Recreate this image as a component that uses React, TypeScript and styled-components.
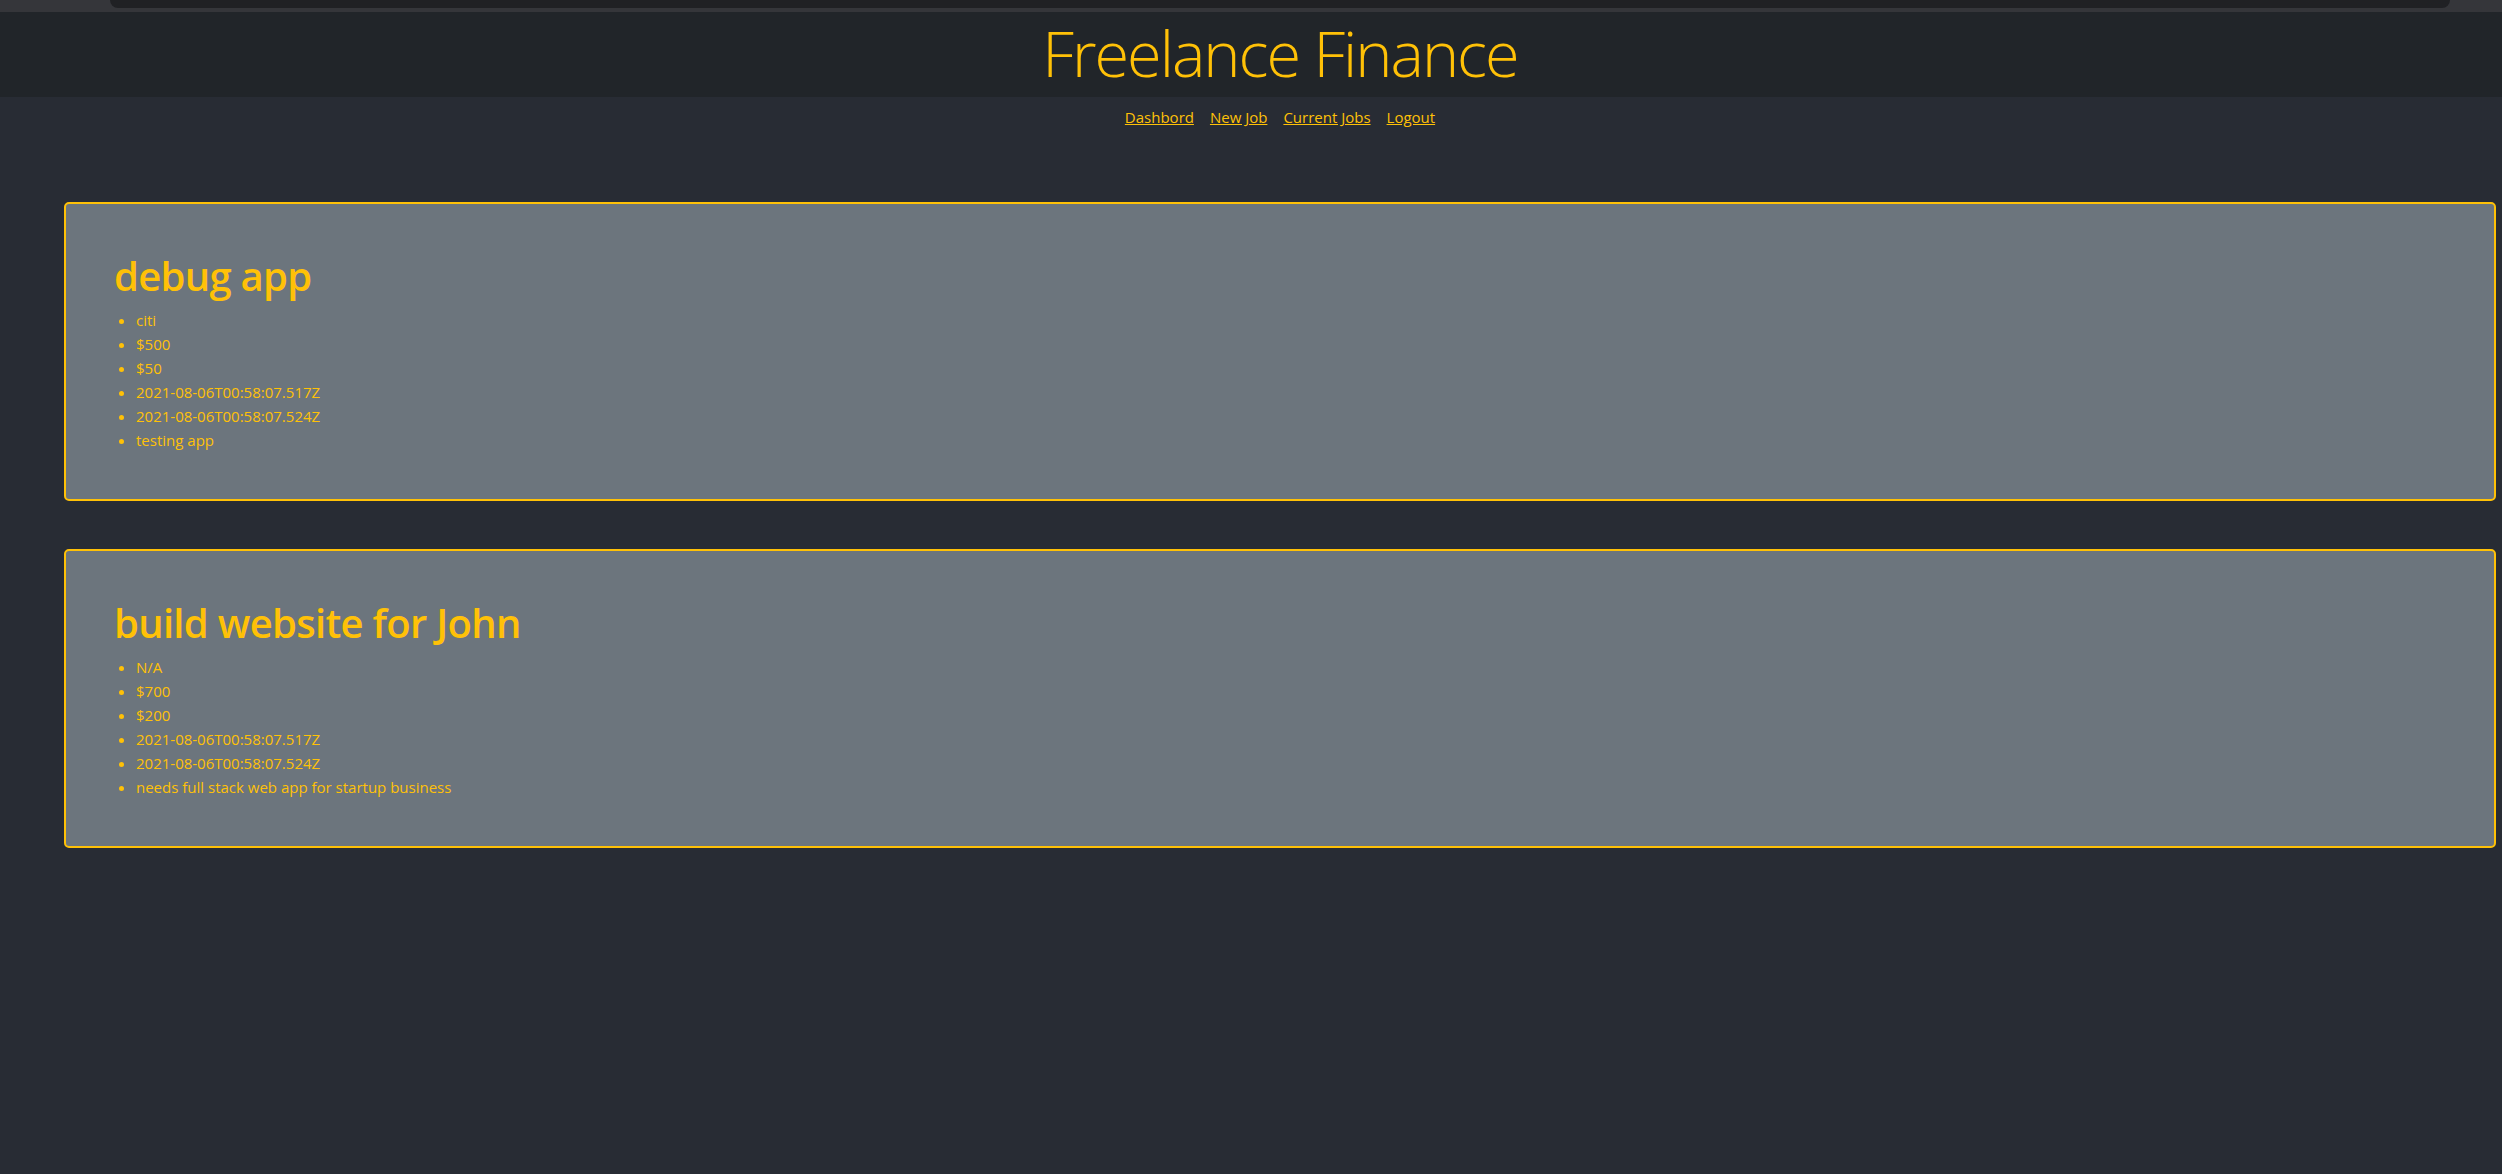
import React from "react";
import styled, { createGlobalStyle } from "styled-components";

const GlobalStyle = createGlobalStyle`
  html, body {
    margin: 0;
    padding: 0;
    overflow: hidden;
    background: #282c34;
  }
  body {
    font-family: "Open Sans", "Noto Sans", "Liberation Sans", sans-serif;
    font-size: 16px;
    line-height: 1.5;
    color: #ffc107;
  }
`;

const Page = styled.div`
  width: 2560px;
  min-height: 1174px;
  background: #282c34;
  display: flex;
  flex-direction: column;
`;

const BrowserStrip = styled.div`
  height: 12px;
  background: #35363a;
  display: flex;
  padding: 0 52px 0 110px;
  width: 2502px;
  box-sizing: border-box;
`;

const UrlBar = styled.div`
  flex: 1;
  height: 8px;
  background: #202124;
  border-radius: 0 0 12px 12px;
`;

const Header = styled.header`
  background: #212529;
  text-align: center;
  padding-top: 3px;
`;

const Title = styled.h1`
  margin: 0 0 6.4px;
  font-size: 63px;
  font-weight: 300;
  line-height: 1.2;
  color: #ffc107;
  letter-spacing: -2px;
`;

const Nav = styled.nav`
  display: flex;
  justify-content: center;
  gap: 16px;
  padding-top: 8px;
  line-height: 24px;
`;

const NavLink = styled.a`
  color: #ffc107;
  text-decoration: underline;
  font-size: 15px;
`;

const Main = styled.main`
  display: flex;
  flex-direction: column;
  gap: 48px;
  padding: 73px 64px 0;
`;

const Card = styled.section`
  background: #6c757d;
  border: 2px solid #ffc107;
  border-radius: 5px;
  padding: 48px 48px 47px;
`;

const JobTitle = styled.h2`
  margin: 0 0 8px;
  font-size: 40px;
  font-weight: 600;
  line-height: 1.2;
  color: #ffc107;
  letter-spacing: -0.7px;
`;

const Details = styled.ul`
  margin: 0;
  padding-left: 22px;
  list-style: disc;
`;

const Detail = styled.li`
  font-size: 15px;
  line-height: 24px;
  color: #ffc107;
`;

const jobs = [
  {
    title: "debug app",
    details: [
      "citi",
      "$500",
      "$50",
      "2021-08-06T00:58:07.517Z",
      "2021-08-06T00:58:07.524Z",
      "testing app",
    ],
  },
  {
    title: "build website for John",
    details: [
      "N/A",
      "$700",
      "$200",
      "2021-08-06T00:58:07.517Z",
      "2021-08-06T00:58:07.524Z",
      "needs full stack web app for startup business",
    ],
  },
];

export default function App() {
  return (
    <>
      <GlobalStyle />
      <Page>
        <BrowserStrip>
          <UrlBar />
        </BrowserStrip>
        <Header>
          <Title>Freelance Finance</Title>
        </Header>
        <Nav>
          <NavLink href="#">Dashbord</NavLink>
          <NavLink href="#">New Job</NavLink>
          <NavLink href="#">Current Jobs</NavLink>
          <NavLink href="#">Logout</NavLink>
        </Nav>
        <Main>
          {jobs.map((job) => (
            <Card key={job.title}>
              <JobTitle>{job.title}</JobTitle>
              <Details>
                {job.details.map((d, i) => (
                  <Detail key={i}>{d}</Detail>
                ))}
              </Details>
            </Card>
          ))}
        </Main>
      </Page>
    </>
  );
}
